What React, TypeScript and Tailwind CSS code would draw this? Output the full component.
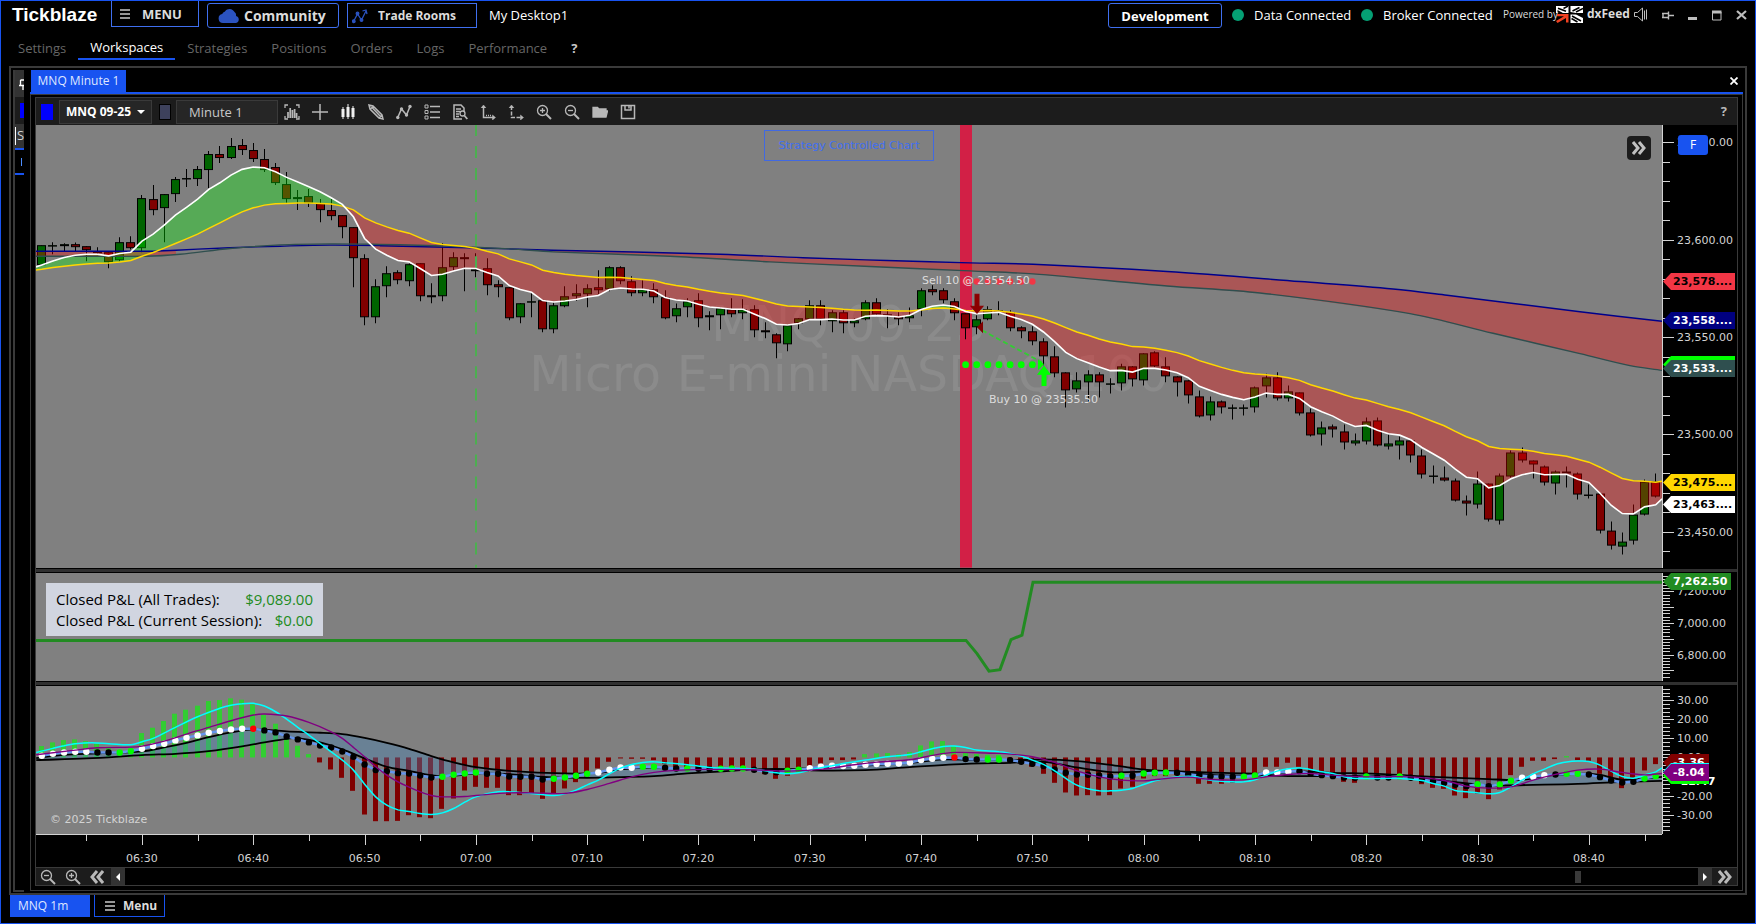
import type { ReactNode } from "react";

const PLOT_W = 1626;
const H1 = 442;
const H2 = 108;
const H3 = 148;
const UP = 1;

const X = (i: number) => 5.8 + 11.13 * i;

const Y = (ticks: number) => ticks / 3;

// high, body top, body bottom, low, direction (1 = up, 0 = down)
type Bar = [number, number, number, number, number];

const shift = (by: number, rows: Bar[]): Bar[] =>
  rows.map(([h, t, b, l, d]) => [h + by, t + by, b + by, l + by, d]);

const BARS: Bar[] = [
  ...shift(-15, [
    [376, 376, 434, 434, 1], [366, 376, 379, 402, 1], [369, 373, 379, 393, 1], [367, 373, 380, 393, 0],
    [378, 379, 391, 423, 0], [381, 392, 400, 402, 0], [396, 397, 426, 444, 0], [351, 367, 421, 423, 1],
    [348, 367, 385, 388, 0], [225, 235, 385, 396, 1], [195, 238, 269, 285, 0], [222, 223, 265, 366, 1],
    [171, 178, 223, 246, 1], [147, 175, 178, 201, 1], [138, 148, 176, 198, 1], [93, 103, 149, 204, 1],
    [78, 103, 115, 129, 0], [54, 79, 115, 117, 1], [57, 76, 91, 105, 0], [69, 91, 118, 126, 0],
    [87, 118, 149, 156, 0], [129, 142, 190, 195, 0], [156, 193, 238, 248, 0], [210, 232, 238, 270, 1],
    [207, 229, 250, 261, 0], [237, 248, 271, 306, 0], [237, 271, 287, 300, 0], [285, 286, 322, 354, 0],
    [321, 322, 415, 501, 0], [402, 415, 590, 615, 0], [477, 499, 590, 609, 1], [438, 460, 499, 531, 1],
    [450, 457, 479, 492, 0], [430, 433, 482, 498, 1], [429, 430, 529, 543, 0], [489, 526, 532, 549, 0],
    [369, 442, 529, 543, 1], [396, 412, 442, 450, 1], [399, 412, 418, 513, 0], [399, 448, 454, 471, 1],
    [414, 445, 496, 525, 0], [480, 493, 502, 531, 0],
  ]),
  ...shift(285, [
    [201, 202, 295, 300, 0], [249, 250, 292, 309, 1], [216, 244, 247, 291, 1], [240, 241, 328, 336, 0],
    [246, 256, 328, 339, 1], [198, 229, 259, 261, 1], [192, 220, 229, 242, 1], [192, 205, 223, 261, 1],
    [150, 202, 211, 222, 0], [138, 142, 208, 213, 1], [138, 142, 184, 192, 0], [168, 184, 220, 228, 0],
    [180, 208, 220, 228, 1], [189, 208, 232, 249, 0], [210, 232, 295, 297, 0], [250, 265, 289, 306, 1],
    [234, 244, 262, 291, 1], [219, 241, 295, 321, 0], [273, 286, 292, 330, 1], [262, 265, 286, 327, 1],
    [234, 268, 283, 291, 0], [237, 268, 280, 297, 1], [255, 268, 331, 351, 0], [306, 331, 337, 354, 0],
    [339, 343, 370, 414, 0], [312, 316, 373, 393, 1], [294, 295, 310, 327, 1], [240, 256, 298, 300, 1],
    [240, 256, 298, 315, 0], [270, 277, 304, 336, 1], [270, 277, 310, 339, 0], [295, 301, 310, 321, 1],
    [240, 247, 298, 300, 1], [234, 247, 283, 288, 0], [267, 282, 285, 324, 0], [276, 289, 298, 315, 0],
    [262, 286, 295, 306, 1], [204, 211, 268, 288, 1], [195, 208, 217, 225, 0], [204, 211, 241, 249, 0],
    [234, 244, 280, 300, 0], [280, 280, 325, 357, 0], [285, 298, 322, 342, 1], [258, 268, 298, 300, 1],
    [243, 270, 273, 285, 1], [270, 277, 325, 333, 0], [318, 322, 334, 354, 0], [318, 334, 364, 375, 0],
    [354, 364, 409, 435, 0], [378, 409, 460, 471, 0], [456, 457, 511, 561, 0], [456, 481, 508, 516, 1],
    [450, 463, 485, 546, 1], [456, 463, 487, 531, 0], [474, 490, 492, 519, 1], [430, 439, 490, 510, 1],
    [437, 439, 478, 498, 0], [399, 400, 481, 495, 1], [393, 397, 439, 441, 0], [411, 439, 469, 486, 0],
    [468, 469, 485, 528, 0], [480, 481, 526, 549, 0], [510, 529, 589, 591, 0], [528, 544, 586, 600, 1],
    [540, 544, 562, 579, 0], [552, 562, 565, 597, 1], [552, 562, 565, 585, 1], [498, 502, 562, 576, 1],
  ]),
  ...shift(465, [
    [280, 292, 319, 351, 1], [276, 292, 355, 360, 0], [315, 334, 355, 363, 1], [336, 337, 400, 405, 0],
    [384, 397, 466, 468, 0], [423, 442, 463, 495, 1], [432, 439, 448, 471, 0], [432, 454, 487, 507, 0],
    [459, 481, 490, 495, 1], [411, 422, 484, 492, 1], [411, 421, 496, 498, 0], [462, 490, 499, 507, 1],
    [468, 481, 496, 537, 1], [480, 481, 526, 546, 0], [507, 526, 583, 594, 0], [555, 586, 589, 609, 1],
    [558, 592, 601, 603, 0], [594, 601, 661, 663, 0], [645, 661, 670, 705, 0], [573, 610, 673, 684, 1],
    [609, 610, 718, 723, 0], [579, 586, 721, 732, 1], [510, 517, 589, 591, 1], [501, 517, 541, 546, 0],
    [540, 541, 553, 594, 0], [555, 559, 607, 615, 0], [570, 574, 610, 642, 1], [558, 574, 580, 621, 0],
    [576, 580, 643, 657, 0], [612, 643, 646, 654, 1], [639, 640, 751, 759, 0], [723, 751, 796, 807, 0],
    [756, 784, 799, 822, 1], [672, 703, 781, 792, 1], [597, 604, 703, 705, 1], [579, 604, 649, 651, 0],
  ]),
];

const add = (by: number, values: number[]) => values.map((v) => v + by);

const FAST = [
  ...add(-15, [
    434, 422, 412, 405, 402, 402, 407, 400, 396, 363, 342, 315, 285, 262, 237, 208, 188, 165, 148, 141, 143, 155,
    172, 186, 200, 215, 233, 253, 290, 355, 387, 405, 421, 425, 445, 466, 462, 452, 444, 445, 457, 467,
  ]),
  ...add(285, [
    196, 208, 216, 241, 245, 242, 238, 230, 226, 208, 203, 206, 207, 212, 232, 239, 242, 252, 260, 263, 267, 267,
    281, 295, 312, 314, 310, 298, 298, 296, 299, 299, 288, 286, 287, 290, 285, 268, 258, 254, 259, 274, 280, 278,
    276, 288, 298, 312, 335, 364, 396, 415, 427, 440, 451, 450, 455, 444, 444, 449, 457, 472, 498, 510, 522, 531,
    538, 530,
  ]),
  ...add(465, [
    338, 342, 342, 354, 379, 394, 407, 425, 438, 435, 449, 460, 464, 478, 501, 520, 539, 566, 590, 595, 622, 615,
    595, 583, 576, 583, 582, 581, 596, 606, 638, 674, 699, 700, 679, 673, 655,
  ]),
];

const SLOW = [
  ...add(-15, [
    447, 442, 438, 434, 431, 429, 428, 425, 421, 408, 397, 384, 370, 356, 342, 325, 308, 291, 275, 263, 255, 251,
    250, 249, 249, 250, 252, 258, 269, 293, 308, 320, 331, 339, 353, 367, 373, 376, 379, 384, 393, 401,
  ]),
  ...add(285, [
    116, 125, 134, 150, 157, 162, 166, 169, 172, 171, 172, 175, 178, 181, 190, 196, 200, 207, 213, 218, 222, 226,
    234, 242, 251, 257, 259, 260, 262, 264, 267, 269, 270, 269, 271, 272, 272, 269, 265, 263, 266, 271, 272, 271,
    272, 276, 281, 287, 296, 308, 322, 335, 345, 356, 365, 371, 379, 380, 384, 390, 397, 407, 421, 431, 441, 450,
    457, 461,
  ]),
  ...add(465, [
    283, 287, 292, 300, 313, 323, 332, 343, 353, 359, 369, 379, 387, 397, 410, 423, 436, 453, 469, 481, 498, 504,
    506, 508, 512, 519, 523, 527, 536, 545, 560, 577, 594, 601, 602, 605, 602,
  ]),
];

type Pt = [number, number];

// Trend lines in plot pixels.
const TREND_A: Pt[] = [
  [0, 126], [114, 126], [140, 125], [194, 122.5], [244, 121], [294, 120], [344, 120.5], [434, 122.5], [517, 125],
  [684, 129], [767, 132.5], [851, 135.3], [934, 137.7], [997, 139], [1131, 146.3], [1264, 156.3], [1357, 163.7],
  [1411, 170], [1544, 186.5], [1626, 196],
];
const TREND_B: Pt[] = [
  [0, 131], [110, 131], [144, 129], [194, 123.3], [244, 119.7], [294, 118.7], [344, 119.3], [414, 121], [474, 123.7],
  [517, 126.7], [634, 131], [734, 136.7], [834, 141.3], [934, 145.7], [997, 148.7], [1131, 160.7], [1224, 167.7],
  [1374, 188.3], [1457, 208], [1544, 228.3], [1594, 240.3], [1626, 245],
];

const line = (pts: Pt[]) => pts.map(([x, y]) => `${x.toFixed(1)},${y.toFixed(1)}`).join(" ");

// Smooth curve through the points.
const smooth = (p: Pt[]) => {
  let d = `M${p[0][0].toFixed(1)} ${p[0][1].toFixed(1)}`;
  for (let i = 0; i < p.length - 1; i++) {
    const a = p[i - 1] ?? p[i];
    const b = p[i];
    const c = p[i + 1];
    const e = p[i + 2] ?? c;
    const k = (c[0] - b[0]) / 3;
    const s1 = (c[1] - a[1]) / (c[0] - a[0]);
    const s2 = (e[1] - b[1]) / (e[0] - b[0]);
    d += `C${(b[0] + k).toFixed(1)} ${(b[1] + s1 * k).toFixed(1)} ${(c[0] - k).toFixed(1)} ${(c[1] - s2 * k).toFixed(1)} ${c[0].toFixed(1)} ${c[1].toFixed(1)}`;
  }
  return d;
};

const fastPts: Pt[] = [[0, Y(425)], ...FAST.map((v, i): Pt => [Math.min(X(i), PLOT_W), Y(v)])];
const slowPts: Pt[] = [[0, Y(434)], ...SLOW.map((v, i): Pt => [Math.min(X(i), PLOT_W), Y(v)])];

// Splits the area between two lines into runs that share a sign.
function cloud(a: Pt[], b: Pt[]) {
  const runs: { up: boolean; top: Pt[]; low: Pt[] }[] = [];
  let run = { up: a[0][1] < b[0][1], top: [a[0]], low: [b[0]] };
  for (let i = 1; i < a.length; i++) {
    const d0 = b[i - 1][1] - a[i - 1][1];
    const d1 = b[i][1] - a[i][1];
    if (d0 * d1 < 0) {
      const t = d0 / (d0 - d1);
      const c: Pt = [a[i - 1][0] + t * (a[i][0] - a[i - 1][0]), a[i - 1][1] + t * (a[i][1] - a[i - 1][1])];
      run.top.push(c);
      run.low.push(c);
      runs.push(run);
      run = { up: d1 > 0, top: [c], low: [c] };
    }
    run.top.push(a[i]);
    run.low.push(b[i]);
  }
  runs.push(run);
  return runs;
}

const PNL: Pt[] = [
  [0, 67.3], [930, 67.3], [941, 80.5], [953, 98], [964, 96.5], [975, 66.5], [986, 62], [997, 9.3], [1626, 9.3],
];

const OSC = 378;
const ZERO = 592 - OSC;
const HIST = [
  558, 547, 540, 538, 543, 551, 562, 570, 565, 519, 503, 483, 461, 449, 437, 423, 420, 415, 419, 433, 463, 491, 533,
  557, 582, 607, 628, 653, 692, 763, 783, 783, 782, 765, 771, 774, 746, 715, 691, 680, 683, 683, 705, 705, 700, 716,
  701, 685, 666, 650, 625, 605, 595, 596, 596, 600, 612, 622, 625, 627, 626, 626, 625, 625, 628, 642, 656, 647, 632,
  622, 610, 600, 600, 598, 582, 580, 579, 583, 576, 556, 544, 543, 558, 578, 582, 584, 584, 600, 610, 620, 641, 668,
  697, 706, 705, 706, 705, 685, 680, 655, 648, 648, 645, 650, 671, 671, 671, 668, 650, 640, 620, 620, 608, 620, 633,
  645, 652, 665, 668, 655, 657, 655, 657, 658, 672, 683, 686, 706, 714, 700, 717, 688, 645, 620, 602, 602, 597, 588,
  600, 602, 641, 660, 684, 660, 631, 612,
];
const DOTS = [
  587, 581, 577, 575, 575, 577, 577, 577, 573, 566, 558, 551, 541, 533, 526, 518, 513, 508, 506, 506, 511, 517, 529,
  538, 547, 556, 562, 574, 590, 613, 630, 633, 639, 640, 646, 652, 650, 644, 640, 637, 641, 641, 649, 650, 650, 658,
  656, 652, 647, 641, 637, 629, 622, 623, 620, 620, 623, 625, 625, 626, 627, 626, 625, 625, 629, 634, 636, 632, 629,
  624, 620, 617, 618, 617, 614, 612, 611, 610, 607, 600, 596, 593, 592, 597, 598, 598, 598, 600, 605, 611, 618, 628,
  638, 643, 644, 646, 649, 647, 647, 640, 638, 637, 638, 642, 646, 648, 649, 650, 650, 646, 637, 637, 634, 633, 641,
  645, 648, 652, 653, 649, 652, 652, 649, 653, 658, 663, 668, 674, 678, 672, 678, 673, 662, 653, 650, 645, 643, 641,
  641, 643, 651, 661, 667, 665, 655, 648,
];
const DOT_KINDS =
  "wwwwwbbggwwwwwwwwwwrbbbbbbbbbbbbbbbbggggbbbbbbggggwwwwggbbgbbgggbbbggwwwwwwwwwwwwwrbbggbbbbbbbbbbgbgggbbbbbbggwwwbbbbbbgbbgbbbbbbgbggwwwbggbbbbbggg";
const DOT_FILL: Record<string, string> = { w: "#ffffff", b: "#000000", g: "#00ff00", r: "#ff0000" };

const osc = (pts: Pt[]): Pt[] => pts.map(([i, v]) => [Math.max(0, Math.min(PLOT_W, X(i))), Y(v - OSC)]);

const CYAN = osc([
  [-0.5, 577], [1, 565], [2, 557], [3, 551], [4.5, 548], [6, 551], [8, 554], [9, 545], [10, 535], [12, 502], [14, 470],
  [16, 445], [17, 436], [18, 431], [19, 430], [20, 438], [21, 455], [22, 477], [23, 502], [24, 525], [25, 550],
  [26, 575], [27, 600], [28, 630], [29, 672], [30, 710], [31, 735], [32, 749], [33, 754], [34, 760], [35, 763],
  [36, 758], [37, 745], [38, 726], [39, 710], [41, 695], [43, 697], [44, 700], [46, 706], [47, 701], [48, 690],
  [49, 674], [50, 660], [51, 641], [52, 624], [53, 613], [54, 607], [55, 605], [56, 608], [58, 614], [60, 622],
  [62, 625], [64, 627], [65, 632], [66, 638], [67, 641], [68, 638], [69, 630], [71, 617], [72, 610], [74, 600],
  [76, 590], [78, 583], [79, 575], [80, 566], [81, 559], [82, 558], [83, 562], [84, 570], [86, 575], [87, 580],
  [88, 588], [89, 600], [90, 613], [91, 632], [92, 655], [93, 675], [94, 686], [95, 692], [96, 692], [97, 690],
  [98, 685], [99, 673], [100, 662], [101, 654], [103, 648], [104, 652], [105, 660], [107, 665], [108, 665], [109, 659],
  [110, 645], [111, 633], [112, 626], [113, 624], [114, 628], [115, 635], [116, 640], [117, 650], [118, 655],
  [122, 655], [124, 661], [125, 670], [126, 678], [127, 691], [128, 695], [129, 698], [130, 701], [131, 697],
  [132, 680], [133, 660], [134, 641], [135, 627], [136, 613], [137, 606], [138, 603], [139, 604], [140, 615],
  [141, 633], [142, 649], [143, 654], [144, 645], [145, 635], [145.6, 623],
]);
const PURPLE = osc([
  [-0.5, 584], [3, 570], [5, 563], [8, 561], [9, 558], [11, 543], [13, 522], [15, 502], [17, 482], [19, 465], [20, 462],
  [22, 468], [24, 487], [26, 515], [27, 535], [28, 562], [29, 590], [30, 620], [31, 645], [32, 665], [33, 681],
  [34, 695], [35, 706], [36, 710], [38, 709], [39, 706], [42, 698], [44, 698], [47, 700], [49, 688], [51, 670],
  [53, 650], [55, 637], [57, 631], [60, 628], [64, 629], [67, 633], [70, 628], [73, 614], [75, 606], [78, 599],
  [80, 586], [82, 577], [86, 580], [87, 582], [89, 590], [91, 607], [93, 632], [95, 650], [97, 660], [99, 662],
  [101, 655], [103, 651], [105, 658], [108, 659], [110, 650], [112, 643], [114, 640], [116, 645], [119, 650],
  [123, 650], [126, 661], [128, 678], [130, 684], [132, 680], [134, 660], [136, 643], [138, 630], [140, 627],
  [142, 637], [144, 644], [145.6, 640],
]);
const BAND_A = osc([
  [-0.5, 600], [4, 595], [9, 585], [12, 581], [15, 573], [18, 559], [20, 547], [22, 536], [23, 534], [25, 547],
  [27, 568], [29, 595], [31, 620], [33, 632], [35, 646], [37, 647], [39, 640], [42, 642], [44, 648], [46, 652],
  [49, 653], [52, 651], [55, 648], [58, 640], [61, 634], [64, 628], [67, 627], [69, 631], [74, 630], [78, 621],
  [82, 613], [87, 608], [90, 605], [93, 622], [96, 636], [100, 634], [103, 638], [106, 646], [110, 646], [113, 648],
  [118, 648], [122, 650], [126, 662], [130, 676], [134, 674], [138, 671], [142, 665], [145.6, 662],
]);
const BAND_B = osc([
  [-0.5, 594], [2, 584], [5, 580], [9, 574], [11, 562], [13, 548], [15, 531], [17, 517], [19, 508], [22, 514], [25, 518],
  [27, 522], [29, 533], [31, 548], [33, 566], [35, 588], [37, 607], [39, 621], [42, 632], [47, 640], [50, 638],
  [52, 628], [55, 622], [58, 626], [62, 628], [66, 629], [69, 624], [73, 618], [78, 608], [81, 598], [84, 600],
  [88, 600], [90, 598], [93, 603], [96, 614], [98, 624], [100, 631], [104, 636], [110, 641], [113, 634], [116, 638],
  [120, 641], [125, 650], [130, 657], [133, 659], [135, 647], [138, 641], [140, 644], [142, 659], [145.6, 650],
]);
const dotPts: Pt[] = DOTS.map((v, i) => [X(i), Y(v - OSC)]);

const pct = (value: number, total: number) => `${(value / total) * 100}%`;

function PricePlot() {
  const trend = cloud(
    TREND_A.filter(([x]) => x < 190),
    TREND_B.filter(([x]) => x < 190).map(([x, y], i): Pt => [[0, 114, 140][i] ?? x, y]),
  );
  const lateA = TREND_A.filter(([x]) => x >= 344);
  const lateB = TREND_B.filter(([x]) => x >= 344);
  return (
    <svg className="absolute inset-0 h-full w-full" viewBox={`0 0 ${PLOT_W} ${H1}`} preserveAspectRatio="none" aria-label="Price chart" role="img">
      <rect x="924" width="12" height={H1} fill="#d22046" />
      {BARS.map(([h, t, b, l, d], i) => {
        const cx = Math.round(X(i) - 0.5) + 0.5;
        const top = Math.round(Y(t)) + 0.5;
        return (
          <g key={i} stroke="#000">
            <line x1={cx} x2={cx} y1={Y(h)} y2={Y(l)} />
            <rect x={cx - 4} width="8" y={top} height={Math.max(0.4, Math.round(Y(b)) - 0.5 - top)} fill={d === UP ? "#006400" : "#800000"} />
          </g>
        );
      })}
      {cloud(fastPts, slowPts).map((r, i) => (
        <polygon key={i} points={line([...r.top, ...[...r.low].reverse()])} fill={r.up ? "#00ff00" : "#ff0000"} opacity="0.33" />
      ))}
      {trend.map((r, i) => (
        <polygon key={i} points={line([...r.top, ...[...r.low].reverse()])} fill="#ff0000" opacity="0.33" />
      ))}
      <polygon points={line([...lateA, ...lateB.reverse()])} fill="#ff0000" opacity="0.33" />
      <line x1="440" x2="440" y1="-1" y2={H1} stroke="#4caf50" strokeWidth="2" strokeDasharray="12 10" />
      <path d={smooth(TREND_A)} fill="none" stroke="#00008b" strokeWidth="1.4" />
      <path d={smooth(TREND_B)} fill="none" stroke="#2f4f4f" strokeWidth="1.4" />
      <polyline points={line(slowPts)} fill="none" stroke="#ffd700" strokeWidth="1.5" />
      <polyline points={line(fastPts)} fill="none" stroke="#fff" strokeWidth="1.6" />
      {[0, 1, 2, 3, 4, 5, 6].map((n) => (
        <g key={n}>
          <circle cx={X(83 + n)} cy="156.3" r="3.2" fill="#f23645" />
          <circle cx={X(83 + n)} cy="239.3" r="3.4" fill="#00ff00" />
        </g>
      ))}
      <path d="M946 205 1006 237" stroke="#32cd32" strokeWidth="1.8" strokeDasharray="5 3" fill="none" />
      <path d="M939 169h4v12h4l-6 7-6-7h4z" fill="#8b0000" stroke="#8b0000" />
      <path d="M941 202l6-6v12z" fill="#800000" />
      <path d="M1002 234l6 5-6 6z" fill="#00ff00" />
      <path d="M1006 260v-11h-4l6-8 6 8h-4v11z" fill="#00ff00" stroke="#00ff00" />
    </svg>
  );
}

function OscPlot() {
  return (
    <svg className="absolute inset-0 h-full w-full" viewBox={`0 0 ${PLOT_W} ${H3}`} preserveAspectRatio="none" aria-label="Oscillator" role="img">
      {HIST.map((v, i) => {
        const t = v - OSC;
        const up = t < ZERO;
        return (
          <rect key={i} x={Math.round(X(i)) - 3} width="5" y={Y(Math.min(t, ZERO))} height={Math.abs(Y(t - ZERO))} fill={up ? "#32cd32" : "#800000"} />
        );
      })}
      <path d={`${smooth(BAND_B)}L${smooth([...BAND_A].reverse()).slice(1)}Z`} fill="#4682b4" opacity="0.4" />
      <path d={smooth(BAND_A)} fill="none" stroke="#000" strokeWidth="1.8" />
      <path d={smooth(BAND_B)} fill="none" stroke="#000" strokeWidth="1.8" />
      <polyline points={line(dotPts)} fill="none" stroke="#6495ed" strokeWidth="2.5" />
      {dotPts.map(([x, y], i) => (
        <circle key={i} cx={x} cy={y} r="3.2" fill={DOT_FILL[DOT_KINDS[i] ?? "b"]} />
      ))}
      <path d={smooth(CYAN)} fill="none" stroke="#00ffff" strokeWidth="1.5" />
      <path d={smooth(PURPLE)} fill="none" stroke="#800080" strokeWidth="1.4" />
    </svg>
  );
}

type Mark = { y: number; long?: boolean; label?: string };

function Axis({ height, marks, children }: { height: number; marks: Mark[]; children?: ReactNode }) {
  return (
    <div className="relative w-[75px] shrink-0 overflow-hidden border-l border-[#d3d3d3] bg-black">
      {marks.map((m) => (
        <div key={m.y} className={`absolute left-0 h-px bg-[#d3d3d3] ${m.long ? "w-[11px]" : "w-[7px]"}`} style={{ top: pct(m.y, height) }} />
      ))}
      {marks
        .filter((m) => m.label)
        .map((m) => (
          <span key={m.label} className="absolute left-[14px] -mt-[7px] text-[11px] leading-4 text-[#d3d3d3]" style={{ top: pct(m.y, height) }}>
            {m.label}
          </span>
        ))}
      {children}
    </div>
  );
}

function Tag({ y, height, color, text = "text-white", width = "w-[72px]", children }: { y: number; height: number; color: string; text?: string; width?: string; children?: ReactNode }) {
  return (
    <div className={`absolute left-0 -mt-[9px] h-[17px] ${width}`} style={{ top: pct(y, height) }}>
      <svg className={`absolute inset-0 h-full w-full ${color}`} viewBox="0 0 72 17" preserveAspectRatio="xMinYMin slice" aria-hidden="true">
        <path d="M0 8.500 8 0H72V17H8Z" fill="currentColor" />
      </svg>
      <span className={`relative block pl-[10px] text-[11px] leading-[18px] font-bold whitespace-nowrap ${text}`}>{children}</span>
    </div>
  );
}

const PRICE_MARKS: Mark[] = Array.from({ length: 22 }, (_, k) => {
  const labels = ["23,650.00", "23,600.00", "23,550.00", "23,500.00", "23,450.00"];
  return { y: 17 + k * 19.47, long: k % 5 === 0, label: k % 5 === 0 ? labels[k / 5] : undefined };
});
const PNL_MARKS: Mark[] = Array.from({ length: 33 }, (_, k) => {
  const labels: Record<number, string> = { 5: "7,200.00", 15: "7,000.00", 25: "6,800.00" };
  return { y: 3 + k * 3.15, long: k % 5 === 0, label: labels[k] };
});
const OSC_MARKS: Mark[] = Array.from({ length: 38 }, (_, k) => {
  const labels: Record<number, string> = { 3: "30.00", 8: "20.00", 13: "10.00", 18: "0.00", 28: "-20.00", 33: "-30.00" };
  return { y: 3 + k * 3.81, long: k % 5 === 3, label: labels[k] };
});
const TIMES = ["06:30", "06:40", "06:50", "07:00", "07:10", "07:20", "07:30", "07:40", "07:50", "08:00", "08:10", "08:20", "08:30", "08:40"];

function Svg({ children, size = "size-4" }: { children: ReactNode; size?: string }) {
  return (
    <svg className={`${size} shrink-0`} viewBox="0 0 16 16" fill="none" stroke="currentColor" strokeWidth="1.3" aria-hidden="true">
      {children}
    </svg>
  );
}

const zoomIn = (
  <Svg>
    <circle cx="6.500" cy="6.500" r="5" />
    <path d="M4 6.500h5M6.500 4v5" />
    <path d="M10 10l5 5" strokeWidth="2" />
  </Svg>
);
const zoomOut = (
  <Svg>
    <circle cx="6.500" cy="6.500" r="5" />
    <path d="M4 6.500h5" />
    <path d="M10 10l5 5" strokeWidth="2" />
  </Svg>
);
const chevrons = (flip = false) => (
  <svg className={`h-[14px] w-[14px] ${flip ? "rotate-180" : ""}`} viewBox="0 0 14 14" fill="none" stroke="currentColor" strokeWidth="3" aria-hidden="true">
    <path d="M1 1 6 7 1 13M7 1 12 7 7 13" />
  </svg>
);

const TOOLS: [string, ReactNode][] = [
  ["Chart style", <Svg><path d="M1 4V1h3M12 1h3v3M1 12v3h3M12 15h3v-3" /><path d="M4 14V8M6.200 14V4M8.400 14V6M10.600 14V5M12.600 14V9" strokeWidth="1.700" /></Svg>],
  ["Crosshair", <Svg><path d="M8 0v16M0 8h16" strokeWidth="1.500" /></Svg>],
  ["Candles", <Svg><g stroke="#f0f0f0"><path d="M3 3v12M8 0v15M13 2v13" strokeWidth="1" /><path d="M3 5v8M8 3v10M13 4v9" strokeWidth="3" /></g></Svg>],
  ["Draw", <Svg><path d="M1 1l1 4 9 9 4 1-1-4-9-9zM2.500 5l3-3M4 3.500l8.500 9M11 14l3-3" strokeWidth="1.500" /></Svg>],
  ["Indicators", <Svg><path d="M1.500 14 5.500 5l5 6L14 2.500" strokeWidth="1.500" /><g fill="currentColor" stroke="none"><circle cx="1.800" cy="13.500" r="1.700" /><circle cx="5.500" cy="5" r="1.700" /><circle cx="10.500" cy="11" r="1.700" /><circle cx="14" cy="2.500" r="1.700" /></g></Svg>],
  ["List", <Svg><path d="M1 1h3v3H1zM1 6.500h3v3H1zM1 12h3v3H1z" strokeWidth="1" /><path d="M6 2.500h10M6 8h10M6 13.500h10" strokeWidth="1.600" /></Svg>],
  ["Report", <Svg><path d="M12 7V4L9 1H2v14h8M4 5h5M4 7.500h4M4 10h3M4 12.500h3" strokeWidth="1.500" /><circle cx="10.500" cy="9.500" r="2.500" /><path d="M12.300 11.500l3 3.500" strokeWidth="1.800" /></Svg>],
  ["Scale axes", <Svg><path d="M3.500 2v11.500H14" strokeWidth="1.500" /><path d="M1 4l2.500-3L6 4M12.500 11l3 2.500-3 2.500z" fill="currentColor" strokeWidth=".5" /><path d="M6 11.500h5" strokeDasharray="1 1" /></Svg>],
  ["Fixed axes", <Svg><path d="M3.500 2v11.500H14" strokeDasharray="4 1.500" strokeWidth="1.500" /><path d="M1 4l2.500-3L6 4M12.500 11l3 2.500-3 2.500z" fill="currentColor" strokeWidth=".5" /></Svg>],
  ["Zoom in", zoomIn],
  ["Zoom out", zoomOut],
  ["Open", <Svg><path d="M1 13V3.500h4.500L7 5h7v2h1.500L14 13z" fill="currentColor" /></Svg>],
  ["Save", <Svg><path d="M1.500 1.500h13v13h-13zM5 1.500v4.500h6V1.500M9 2v2.500" strokeWidth="1.500" /></Svg>],
];

const NAV = ["Settings", "Workspaces", "Strategies", "Positions", "Orders", "Logs", "Performance"];

function Burger() {
  return (
    <svg className="h-[10px] w-[10px]" viewBox="0 0 10 10" aria-hidden="true">
      <path d="M0 1h10M0 5h10M0 9h10" stroke="#c8c8c8" strokeWidth="1.600" />
    </svg>
  );
}

function Header() {
  return (
    <header className="flex h-[32px] items-start pr-2 pl-[11px] whitespace-nowrap">
      <h1 className="w-[99px] pt-[2px] font-['Liberation_Sans',sans-serif] text-[19px] leading-6 font-bold text-white">Tickblaze</h1>
      <button className="flex h-[26px] w-[88px] items-center gap-3 border border-t-0 border-[#3f6ff0] pl-2 text-[13px] leading-5 font-bold text-[#dcdcdc]">
        <Burger />
        MENU
      </button>
      <button className="mt-[2px] ml-2 flex h-[25px] w-[132px] items-center gap-1 rounded-[3px] border border-[#3f6ff0] pl-[10px] text-sm leading-5 font-bold text-[#dcdcdc]">
        <svg className="h-4 w-[22px] shrink-0" viewBox="0 0 22 16" aria-hidden="true">
          <path d="M5 15a4.500 4.500 0 0 1-.8-8.900A4 4 0 0 1 7 3.500 5.500 5.500 0 0 1 16.500 4a4 4 0 0 1 1.500 4A3.600 3.600 0 0 1 18 15z" fill="#2b53c0" />
        </svg>
        Community
      </button>
      <button className="mt-[2px] ml-2 flex h-[25px] w-[130px] items-center gap-[10px] border border-[#3f6ff0] pl-1 text-[12px] leading-5 font-bold text-[#dcdcdc]">
        <span className="text-[#2b53c0]">
          <Svg><path d="M1.500 13.500 5.500 6l4 6L14 3" strokeWidth="1.300" /><path d="M10.500 3 14 2l1 4" /><circle cx="1.800" cy="13.300" r="1.300" fill="currentColor" /><circle cx="5.500" cy="5.500" r="1.300" fill="currentColor" /><circle cx="9.500" cy="12" r="1.300" fill="currentColor" /></Svg>
        </span>
        Trade Rooms
      </button>
      <span className="mt-[4px] ml-3 text-[13px] leading-5 text-white">My Desktop1</span>
      <div className="flex-1" />
      <button className="mt-[2px] h-[25px] w-[114px] rounded-[3px] border border-[#3f6ff0] text-[13px] leading-5 font-bold text-white">Development</button>
      <span className="mt-[8px] ml-[10px] size-3 rounded-full bg-[#05a074]" />
      <span className="mt-[4px] ml-[10px] w-[98px] text-[13px] leading-5 text-white">Data Connected</span>
      <span className="mt-[8px] ml-[9px] size-3 rounded-full bg-[#05a074]" />
      <span className="mt-[4px] ml-[10px] w-[110px] text-[13px] leading-5 text-white">Broker Connected</span>
      <span className="mt-[3px] ml-[10px] w-[52px] text-[10px] leading-5 text-[#dcdcdc]">Powered by</span>
      <svg className="mt-[5px] ml-px h-[17px] w-[27px]" viewBox="0 0 27 17" aria-hidden="true">
        <g fill="#fff">
          <path d="M0 0h12.500v7H7L1.500 4V7H0z" />
          <path d="M14.500 0H27v7h-7l-5.500-1z" />
          <path d="M14.500 17V8.500H20L27 12v5z" />
        </g>
        <path d="M2 2.300 10 5.300M12 0 7.500 2.500M16.500 5 23.500 1.500M27 2.500 20 6M16 10l9 5M15.500 12.500l6 3.500" stroke="#000" strokeWidth="1.500" />
        <path d="M1 8h11.500v8.500H10V12L1.500 17 0 15l8-4.800H1z" fill="#f04020" />
      </svg>
      <span className="mt-[3px] ml-1 w-[40px] text-xs leading-5 font-bold text-[#dcdcdc]">dxFeed</span>
      <div className="mt-[6px] ml-[7px] flex w-[113px] items-center justify-between text-[#bdbdbd]">
        <button aria-label="Sound"><svg className="h-4 w-[14px]" viewBox="0 0 14 16" fill="none" stroke="currentColor" aria-hidden="true"><path d="M.5 5.500h3l5-4.500v13l-5-4.500h-3zM10.500 3.500v9M12.500 2.500v10" /></svg></button>
        <button aria-label="Pin"><svg className="h-3 w-3" viewBox="0 0 12 12" fill="none" stroke="currentColor" strokeWidth="1.400" aria-hidden="true"><path d="M0 4.500h6M0 8.500h6M1 4.500v4M6.500 2.500v8M6 6.500h6" /></svg></button>
        <button aria-label="Minimize"><svg className="h-3 w-[10px]" viewBox="0 0 10 12" aria-hidden="true"><path d="M0 9.500h9" stroke="currentColor" strokeWidth="3" /></svg></button>
        <button aria-label="Maximize"><svg className="h-3 w-[10px]" viewBox="0 0 10 12" fill="none" stroke="currentColor" aria-hidden="true"><path d="M.5 3v8h8.500V3" /><path d="M0 3h9.500" strokeWidth="3" /></svg></button>
        <button aria-label="Close"><svg className="h-3 w-[11px]" viewBox="0 0 11 12" stroke="currentColor" strokeWidth="2.200" aria-hidden="true"><path d="M1 2l9 8M10 2l-9 8" /></svg></button>
      </div>
    </header>
  );
}

function Separator() {
  return <div className="h-[5px] shrink-0 border-y border-black bg-[#303030]" />;
}

export default function App() {
  return (
    <div className="flex h-screen min-h-[600px] flex-col overflow-hidden border border-[#1853f0] bg-black font-['Open_Sans','Noto_Sans',sans-serif] text-[#d3d3d3]">
      <Header />
      <nav className="flex h-[33px] items-start pl-[5px] text-[13px] leading-5 whitespace-nowrap">
        {NAV.map((n) => (
          <a key={n} href="#" className={n === "Workspaces" ? "border-b-2 border-[#1853f0] px-3 pt-[4px] pb-px text-white" : "px-3 pt-[5px] text-[#666]"}>
            {n}
          </a>
        ))}
        <a href="#" className="px-3 pt-[5px] font-bold text-[#c8c8c8]">?</a>
      </nav>

      <div className="mr-2 ml-2 flex min-h-0 flex-1 border-2 border-[#3a3a3a] pt-[2px]">
        <aside className="mt-0 mr-[6px] mb-[1px] ml-[2px] flex w-[11px] flex-col overflow-hidden border-b-2 border-l-2 border-[#3a3a3a]">
          <div className="flex h-[27px] items-center bg-[#333] pl-1">
            <svg className="h-3 w-[5px]" viewBox="0 0 5 12" stroke="#fff" fill="none" aria-hidden="true"><path d="M0 7.500h5M1.500 2v5M4 7v5M1.500 2H5" strokeWidth="1.300" /></svg>
          </div>
          <div className="flex h-[27px] items-center bg-[#1c1c1c] pl-[5px]"><span className="h-[15px] w-1 bg-[#0000ff]" /></div>
          <div className="flex h-[26px] items-center overflow-hidden border-b-2 border-[#1853f0] bg-[#333] text-[13px]"><span className="h-[18px] w-px shrink-0 bg-white" /><span className="pl-px">S</span></div>
          <div className="flex h-[25px] items-center border-b-2 border-[#1853f0] pl-[6px]"><span className="h-2 w-px bg-[#4c8dff]" /></div>
        </aside>

        <section className="flex min-w-0 flex-1 flex-col pr-[2px] pb-[2px]">
          <div className="flex h-[24px] items-center justify-between border-b-2 border-[#1853f0]">
            <button className="ml-px h-[22px] w-[95px] bg-[#1853f0] text-xs leading-[22px] whitespace-nowrap text-[#dfe6ff]">MNQ Minute 1</button>
            <button aria-label="Close tab" className="mr-[5px] text-white">
              <svg className="size-2" viewBox="0 0 8 8" stroke="currentColor" strokeWidth="1.800" aria-hidden="true"><path d="M.5 .5l7 7M7.500 .5l-7 7" /></svg>
            </button>
          </div>
          <div className="flex min-h-0 flex-1 flex-col border border-[#3a3a3a] px-1 pt-[2px] pb-1">
            <div className="flex min-h-0 flex-1 flex-col border border-[#3a3a3a]">
              <div className="flex h-[27px] shrink-0 items-center bg-[#1c1c1c] pl-[5px] text-[#b8b8b8]">
                <span className="h-4 w-3 bg-[#0000ff]" />
                <label className="relative ml-[6px] flex h-6 w-[93px] items-center border border-[#3a3a3a] bg-[#262626]">
                  <select aria-label="Instrument" className="h-full w-full appearance-none bg-transparent pl-[6px] text-xs font-bold text-white">
                    <option>MNQ 09-25</option>
                  </select>
                  <span className="pointer-events-none absolute right-[6px] border-x-4 border-t-4 border-x-transparent border-t-white" />
                </label>
                <span className="ml-[7px] h-4 w-3 border border-black bg-[#3d415c]" />
                <input aria-label="Interval" defaultValue="Minute 1" className="ml-[5px] h-6 w-[102px] border border-[#3a3a3a] bg-[#262626] px-3 text-[13px] text-[#c8c8c8]" />
                <div className="ml-[6px] flex gap-3">
                  {TOOLS.map(([name, icon]) => (
                    <button key={name} aria-label={name}>{icon}</button>
                  ))}
                </div>
                <button className="mr-[10px] ml-auto text-[13px] font-bold">?</button>
              </div>

              <div className="flex min-h-0 flex-1 flex-col font-['DejaVu_Sans',sans-serif]">
                <div className="flex min-h-0 flex-[442]">
                  <div className="relative flex min-w-0 flex-1 items-center justify-center overflow-hidden bg-[#808080]">
                    <p className="pt-[7px] text-center text-[49px] leading-[50px] whitespace-nowrap text-[#8b8b8b]">
                      MNQ 09-25
                      <br />
                      Micro E-mini NASDAQ-100
                    </p>
                    <PricePlot />
                    <span className="absolute -mt-[7px] text-[11px] leading-4 whitespace-nowrap text-[#dcdcdc]" style={{ left: pct(886, PLOT_W), top: pct(155, H1) }}>Sell 10 @ 23554.50</span>
                    <span className="absolute -mt-[7px] text-[11px] leading-4 whitespace-nowrap text-[#dcdcdc]" style={{ left: pct(953, PLOT_W), top: pct(274, H1) }}>Buy 10 @ 23535.50</span>
                    <button className="absolute top-[5px] left-1/2 h-[31px] w-[170px] -translate-x-1/2 border border-[#4169e1] pt-[2px] text-[11px] whitespace-nowrap text-[#3f6ff0]">Strategy Controlled Chart</button>
                    <button aria-label="Collapse" className="absolute top-[11px] right-[11px] flex size-6 items-center justify-center rounded-[4px] bg-[#1c1c1c] text-[#c0c0c0]">{chevrons()}</button>
                  </div>
                  <Axis height={H1} marks={PRICE_MARKS}>
                    <button className="absolute top-[10px] left-[15px] h-5 w-[30px] rounded-[3px] bg-[#1853f0] font-['Open_Sans',sans-serif] text-xs text-white">F</button>
                    <Tag y={157} height={H1} color="text-[#f23645]" text="text-black">23,578....</Tag>
                    <Tag y={196} height={H1} color="text-[#000080]">23,558....</Tag>
                    <Tag y={240} height={H1} color="text-[#00ff00]" />
                    <Tag y={244} height={H1} color="text-[#2f4f4f]">23,533....</Tag>
                    <Tag y={357} height={H1} color="text-[#ffd700]" text="text-black">23,475....</Tag>
                    <Tag y={379} height={H1} color="text-white" text="text-black">23,463....</Tag>
                  </Axis>
                </div>
                <Separator />
                <div className="flex min-h-0 flex-[108]">
                  <div className="relative min-w-0 flex-1 overflow-hidden bg-[#808080]">
                    <svg className="absolute inset-0 h-full w-full" viewBox={`0 0 ${PLOT_W} ${H2}`} preserveAspectRatio="none" aria-label="Profit and loss" role="img">
                      <polyline points={line(PNL)} fill="none" stroke="#228b22" strokeWidth="3" />
                    </svg>
                    <dl className="absolute top-[10px] left-[10px] w-[277px] bg-[#d1d5e0] px-[10px] pt-[6px] pb-[5px] font-['Open_Sans',sans-serif] text-[15px] leading-[21px] whitespace-nowrap text-black">
                      <div className="flex justify-between">
                        <dt>Closed P&amp;L (All Trades):</dt>
                        <dd className="text-[#228b22]">$9,089.00</dd>
                      </div>
                      <div className="flex justify-between">
                        <dt>Closed P&amp;L (Current Session):</dt>
                        <dd className="text-[#228b22]">$0.00</dd>
                      </div>
                    </dl>
                  </div>
                  <Axis height={H2} marks={PNL_MARKS}>
                    <Tag y={9} height={H2} color="text-[#228b22]" width="w-[68px]">7,262.50</Tag>
                  </Axis>
                </div>
                <Separator />
                <div className="flex min-h-0 flex-[148]">
                  <div className="relative min-w-0 flex-1 overflow-hidden bg-[#808080]">
                    <OscPlot />
                    <span className="absolute bottom-[6px] left-[14px] text-[11px] leading-4">© 2025 Tickblaze</span>
                  </div>
                  <Axis height={H3} marks={OSC_MARKS}>
                    <span className="absolute left-[13px] -mt-2 text-[11px] leading-4 font-bold text-white" style={{ top: pct(96, H3) }}>-12.47</span>
                    <Tag y={77} height={H3} color="text-[#800000]" width="w-[46px]">-3.36</Tag>
                    <Tag y={86} height={H3} color="text-[#00ffff]" width="w-[46px]" />
                    <Tag y={90} height={H3} color="text-[#00ff00]" width="w-[46px]" />
                    <Tag y={87} height={H3} color="text-[#800080]" width="w-[46px]">-8.04</Tag>
                  </Axis>
                </div>
                <div className="flex h-[33px] shrink-0">
                  <div className="relative min-w-0 flex-1 border-t border-[#d3d3d3]">
                    {Array.from({ length: 29 }, (_, k) => (
                      <div key={k} className={`absolute top-0 w-px bg-[#d3d3d3] ${k % 2 === 1 ? "h-[10px]" : "h-[6px]"}`} style={{ left: pct(X(4 + k * 5), PLOT_W) }} />
                    ))}
                    {TIMES.map((t, k) => (
                      <span key={t} className="absolute top-4 -translate-x-1/2 text-[11px] leading-4" style={{ left: pct(X(9 + k * 10), PLOT_W) }}>{t}</span>
                    ))}
                  </div>
                  <div className="w-[75px] shrink-0" />
                </div>
              </div>

              <div className="flex h-[18px] shrink-0 items-stretch border-t border-[#3a3a3a] text-[#b8b8b8]">
                <div className="flex w-[75px] items-center gap-[9px] bg-[#1c1c1c] pl-1">
                  <button aria-label="Zoom out time axis">{zoomOut}</button>
                  <button aria-label="Zoom in time axis">{zoomIn}</button>
                  <button aria-label="Go to start">{chevrons(true)}</button>
                </div>
                <button aria-label="Scroll left" className="flex w-[14px] items-center justify-center bg-[#333]">
                  <span className="border-y-4 border-r-4 border-y-transparent border-r-white" />
                </button>
                <div className="flex flex-1 items-center justify-end pr-[117px]">
                  <div className="h-3 w-[6px] bg-[#3a3a3a]" />
                </div>
                <button aria-label="Scroll right" className="flex w-[14px] items-center justify-center bg-[#333]">
                  <span className="border-y-4 border-l-4 border-y-transparent border-l-white" />
                </button>
                <button aria-label="Go to end" className="flex w-[25px] items-center justify-center bg-[#1c1c1c]">{chevrons()}</button>
              </div>
            </div>
          </div>
        </section>
      </div>

      <footer className="flex h-[28px] shrink-0 items-start gap-1 pl-[9px] text-xs">
        <button className="h-[22px] w-20 bg-[#1853f0] pl-2 text-left text-[#dfe6ff]">MNQ 1m</button>
        <button className="flex h-[22px] w-[71px] items-center gap-2 border border-t-0 border-[#1853f0] pl-[10px] font-bold text-[#dcdcdc]">
          <Burger />
          Menu
        </button>
      </footer>
    </div>
  );
}
